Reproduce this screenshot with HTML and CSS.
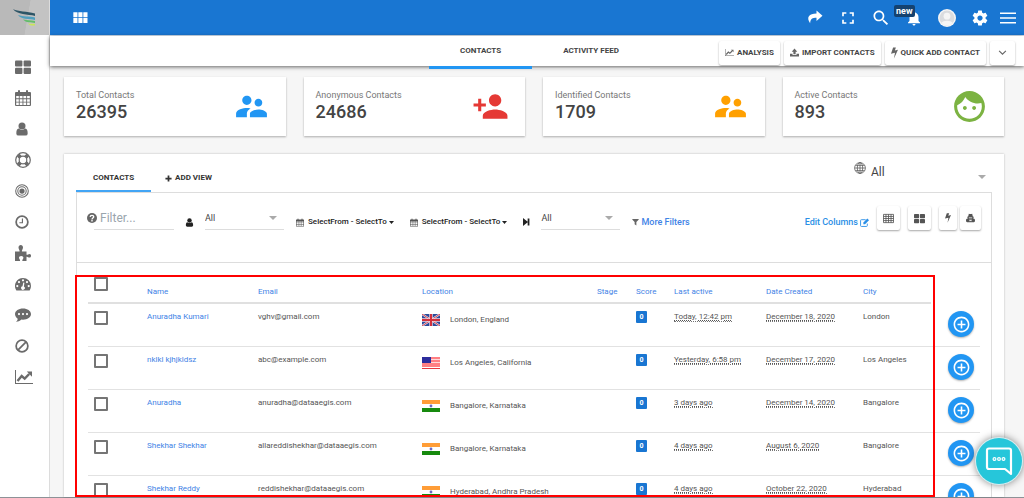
FILE: index.html
```html
<!DOCTYPE html>
<html lang="en">
<head>
	<meta charset="utf-8">
	<meta name="viewport" content="width=device-width, initial-scale=1">
	<title>Contacts</title>
	<link rel="stylesheet" href="styles.css">
</head>
<body>

<!-- icons -->
<svg class="sprite" width="0" height="0" aria-hidden="true">
	<symbol id="i-module" viewBox="0 0 24 24"><path d="M4 11h5V5H4v6zm0 7h5v-6H4v6zm6 0h5v-6h-5v6zm6 0h5v-6h-5v6zm-6-7h5V5h-5v6zm6-6v6h5V5h-5z"/></symbol>
	<symbol id="i-share" viewBox="0 0 24 24"><path d="M14 6V2l8 7-8 7v-4.500c-5.500 0-8 1-8.500 7.500C0 11 4 6 14 6z"/></symbol>
	<symbol id="i-full" viewBox="0 0 24 24"><path d="M7 14H5v5h5v-2H7v-3zm-2-4h2V7h3V5H5v5zm12 7h-3v2h5v-5h-2v3zM14 5v2h3v3h2V5h-5z"/></symbol>
	<symbol id="i-search" viewBox="0 0 24 24"><path d="M15.5 14h-.79l-.28-.27C15.41 12.59 16 11.11 16 9.5 16 5.91 13.09 3 9.5 3S3 5.91 3 9.5 5.91 16 9.5 16c1.61 0 3.09-.59 4.23-1.57l.27.28v.79l5 4.99L20.49 19l-4.99-5zm-6 0C7.01 14 5 11.99 5 9.5S7.01 5 9.5 5 14 7.01 14 9.5 11.99 14 9.5 14z"/></symbol>
	<symbol id="i-bell" viewBox="0 0 24 24"><path d="M12 22c1.1 0 2-.9 2-2h-4c0 1.1.89 2 2 2zm6-6v-5c0-3.07-1.64-5.64-4.5-6.32V4c0-.83-.67-1.5-1.5-1.5s-1.5.67-1.5 1.5v.68C7.63 5.36 6 7.92 6 11v5l-2 2v1h16v-1l-2-2z"/></symbol>
	<symbol id="i-avatar" viewBox="0 0 24 24"><circle cx="12" cy="12" r="12" fill="#f5f5f5"/><circle cx="12" cy="12" r="10" fill="#dadcdf"/><circle cx="12" cy="9.500" r="4.500" fill="#f5f5f5"/><path d="M4.500 18.500c2-4 13-4 15 0a10 10 0 0 1-15 0z" fill="#f5f5f5"/></symbol>
	<symbol id="i-gear" viewBox="0 0 24 24"><path d="M19.43 12.98c.04-.32.07-.64.07-.98s-.03-.66-.07-.98l2.11-1.65c.19-.15.24-.42.12-.64l-2-3.46c-.12-.22-.39-.3-.61-.22l-2.49 1c-.52-.4-1.08-.73-1.69-.98l-.38-2.65C14.46 2.18 14.25 2 14 2h-4c-.25 0-.46.18-.49.42l-.38 2.65c-.61.25-1.17.59-1.69.98l-2.49-1c-.23-.09-.49 0-.61.22l-2 3.46c-.13.22-.07.49.12.64l2.11 1.65c-.04.32-.07.65-.07.98s.03.66.07.98l-2.11 1.65c-.19.15-.24.42-.12.64l2 3.46c.12.22.39.3.61.22l2.49-1c.52.4 1.08.73 1.69.98l.38 2.65c.03.24.24.42.49.42h4c.25 0 .46-.18.49-.42l.38-2.65c.61-.25 1.17-.59 1.69-.98l2.49 1c.23.09.49 0 .61-.22l2-3.46c.12-.22.07-.49-.12-.64l-2.11-1.65zM12 15.5c-1.93 0-3.5-1.57-3.5-3.5s1.57-3.5 3.5-3.5 3.5 1.57 3.5 3.5-1.57 3.5-3.5 3.5z"/></symbol>
	<symbol id="i-menu" viewBox="0 0 16 16"><path d="M0 2.500h16v1.500H0zM0 7.300h16v1.500H0zM0 12.100h16v1.500H0z"/></symbol>
	<symbol id="i-people" viewBox="0 0 24 24"><path d="M16.5 12c1.38 0 2.49-1.12 2.49-2.5S17.88 7 16.5 7C15.12 7 14 8.12 14 9.5s1.12 2.5 2.5 2.5zM9 11c1.66 0 2.99-1.34 2.99-3S10.66 5 9 5C7.34 5 6 6.34 6 8s1.34 3 3 3zm7.5 3c-1.83 0-5.500.92-5.500 2.750V19h11v-2.250c0-1.830-3.670-2.750-5.500-2.750zM9 13c-2.330 0-7 1.170-7 3.500V19h7v-2.250c0-.85.33-2.340 2.370-3.470C10.500 13.100 9.660 13 9 13z"/></symbol>
	<symbol id="i-person-add" viewBox="0 0 24 24"><path d="M15 12c2.210 0 4-1.790 4-4s-1.790-4-4-4-4 1.790-4 4 1.790 4 4 4zm-9-2V7H4v3H1v2h3v3h2v-3h3v-2H6zm9 4c-2.670 0-8 1.340-8 4v2h16v-2c0-2.660-5.330-4-8-4z"/></symbol>
	<symbol id="i-face" viewBox="0 0 24 24"><path d="M9 11.750c-.69 0-1.250.56-1.250 1.250s.56 1.250 1.250 1.250 1.250-.56 1.250-1.250-.56-1.250-1.250-1.250zm6 0c-.69 0-1.250.56-1.250 1.250s.56 1.250 1.250 1.250 1.250-.56 1.250-1.250-.56-1.250-1.250-1.250zM12 2C6.480 2 2 6.480 2 12s4.480 10 10 10 10-4.480 10-10S17.520 2 12 2zm0 18c-4.410 0-8-3.590-8-8 0-.29.02-.58.05-.86 2.360-1.050 4.230-2.980 5.210-5.370C11.070 8.330 14.050 10 17.420 10c.78 0 1.530-.09 2.250-.26.21.71.33 1.470.33 2.260 0 4.410-3.590 8-8 8z"/></symbol>
	<symbol id="i-plus-circle" viewBox="0 0 24 24"><path d="M13 7h-2v4H7v2h4v4h2v-4h4v-2h-4V7zm-1-5C6.480 2 2 6.480 2 12s4.480 10 10 10 10-4.480 10-10S17.520 2 12 2zm0 18c-4.410 0-8-3.590-8-8s3.590-8 8-8 8 3.590 8 8-3.590 8-8 8z"/></symbol>
	<symbol id="i-tiles" viewBox="0 0 16 16"><rect x="0" y="1.500" width="7.400" height="6.100" rx="1"/><rect x="8.600" y="1.500" width="7.400" height="6.100" rx="1"/><rect x="0" y="8.800" width="7.400" height="6.100" rx="1"/><rect x="8.600" y="8.800" width="7.400" height="6.100" rx="1"/></symbol>
	<symbol id="i-calendar" viewBox="0 0 16 16"><path fill-rule="evenodd" d="M1 2h2V1q0-1 1-1t1 1v1h6V1q0-1 1-1t1 1v1h2q1 0 1 1v12q0 1-1 1H1q-1 0-1-1V3q0-1 1-1zM1.200 6v2.300h2.600V6zM4.700 6v2.300h2.800V6zM8.400 6v2.300h2.800V6zM12.100 6v2.300h2.700V6zM1.200 9.200v2.500h2.600V9.200zM4.700 9.200v2.500h2.800V9.200zM8.400 9.200v2.500h2.800V9.200zM12.100 9.200v2.500h2.700V9.200zM1.200 12.600V15h2.600v-2.400zM4.700 12.600V15h2.800v-2.400zM8.400 12.600V15h2.800v-2.400zM12.100 12.600V15h2.700v-2.400z"/></symbol>
	<symbol id="i-user" viewBox="0 0 16 16"><circle cx="8" cy="4.500" r="4"/><path d="M4.200 7.500Q8 10.500 11.800 7.500C13.800 8 14.500 10 14.500 13q0 2.500-2.500 2.500H4Q1.500 15.500 1.500 13c0-3 .7-5 2.700-5.500z"/></symbol>
	<symbol id="i-ring" viewBox="0 0 16 16"><g fill="none" stroke="currentColor"><circle cx="8" cy="8" r="7.300" stroke-width="1.200"/><circle cx="8" cy="8" r="3.800" stroke-width="1.200"/><path d="M3.200 3.200l2.200 2.200M12.800 3.200l-2.200 2.200M3.200 12.800l2.200-2.200M12.800 12.800l-2.200-2.200" stroke-width="3.800"/></g></symbol>
	<symbol id="i-target" viewBox="0 0 16 16"><g fill="none" stroke="currentColor" stroke-width="1.200"><circle cx="8" cy="8" r="7.200"/><circle cx="8" cy="8" r="4.800"/></g><circle cx="8" cy="8" r="3"/></symbol>
	<symbol id="i-clock" viewBox="0 0 16 16"><g fill="none" stroke="currentColor"><circle cx="8" cy="8" r="6.700" stroke-width="2"/><path d="M8.500 4v4.800H5" stroke-width="1.300"/></g></symbol>
	<symbol id="i-puzzle" viewBox="0 0 16 16"><path d="M0 6.500h4.500C5 5 3.500 4.500 3.500 2.500 3.500 1 4.500 0 5.800 0S8 1 8 2.500C8 4.500 6.500 5 7 6.500h4.500v3.200c1.200.6 1.500-.7 3-.7 1 0 1.500.8 1.500 1.700s-.5 1.800-1.500 1.800c-1.500 0-1.800-1.300-3-.7V16H7.400c-.5-1.600 1-1.700 1-3.200 0-1.100-.9-1.800-2.200-1.800s-2.200.7-2.200 1.800c0 1.500 1.500 1.600 1 3.200H0z"/></symbol>
	<symbol id="i-gauge" viewBox="0 0 16 16"><path fill-rule="evenodd" d="M8 2a8 8 0 0 1 8 8q0 2.300-1.200 4.200-.2.300-.6.300H1.800q-.4 0-.6-.3A8 8 0 0 1 8 2zM8 3.200a1 1 0 1 0 0 2.200 1 1 0 0 0 0-2.200zM4 5a1 1 0 1 0 0 2.200A1 1 0 0 0 4 5zM12 5a1 1 0 1 0 0 2.200A1 1 0 0 0 12 5zM2.300 9a1 1 0 1 0 0 2.200 1 1 0 0 0 0-2.200zM13.700 9a1 1 0 1 0 0 2.200 1 1 0 0 0 0-2.200zM8.300 6.500l-.8 3.800a1.800 1.800 0 1 0 1.400.2l.5-3.800z"/></symbol>
	<symbol id="i-comment" viewBox="0 0 16 16"><path fill-rule="evenodd" d="M8 1.500c4.400 0 8 2.400 8 5.600s-3.600 5.600-8 5.600q-.8 0-1.600-.1C4.800 14 3 14.800 1 14.900c1-.8 1.600-1.700 1.700-3.200C1 10.600 0 9 0 7.100c0-3.200 3.600-5.600 8-5.600zM4 6a1.100 1.100 0 1 0 0 2.200A1.100 1.100 0 0 0 4 6zM8 6a1.100 1.100 0 1 0 0 2.200A1.100 1.100 0 0 0 8 6zM12 6a1.100 1.100 0 1 0 0 2.200A1.100 1.100 0 0 0 12 6z"/></symbol>
	<symbol id="i-ban" viewBox="0 0 16 16"><g fill="none" stroke="currentColor" stroke-width="2"><circle cx="8" cy="8" r="6.700"/><path d="M12.700 3.300l-9.400 9.400"/></g></symbol>
	<symbol id="i-chart" viewBox="0 0 18 16"><path d="M0 1h1v13h17v1H0z"/><path d="M2.500 12l4.200-5 3 2.600 4.500-4.600" fill="none" stroke="currentColor" stroke-width="2.400"/><path d="M11.800 2.500H17v5.200z"/></symbol>
	<symbol id="i-upload" viewBox="0 0 16 16"><path d="M8 1l5 5.500h-3V11H6V6.500H3zM0 10h4.500v2.500h7V10H16v5H0z"/></symbol>
	<symbol id="i-bolt" viewBox="0 0 10 16"><path d="M3 0h4L5.500 4.300 10 3.200 4.200 16l1.500-8.500L0 9z"/></symbol>
	<symbol id="i-down" viewBox="0 0 16 16"><path d="M2 5l6 6 6-6" fill="none" stroke="currentColor" stroke-width="2"/></symbol>
	<symbol id="i-plus" viewBox="0 0 16 16"><path d="M6 1h4v5h5v4h-5v5H6v-5H1V6h5z"/></symbol>
	<symbol id="i-globe" viewBox="0 0 16 16"><g fill="none" stroke="currentColor"><circle cx="8" cy="8" r="7.200"/><ellipse cx="8" cy="8" rx="3.600" ry="7.200"/><path d="M8 1v14M1 8h14M2 4.500h12M2 11.500h12"/></g></symbol>
	<symbol id="i-help" viewBox="0 0 16 16"><circle cx="8" cy="8" r="8"/><g stroke="#fff" stroke-width="2.200" fill="none"><path d="M5 6.200C5.300 2.800 11 3 10.700 6.200 10.500 8 8 8 8 10.200M8 11.300v2.200"/></g></symbol>
	<symbol id="i-skip" viewBox="0 0 12 16"><path d="M0 1l8 6.500V2h3v12H8V8.500L0 15z"/></symbol>
	<symbol id="i-funnel" viewBox="0 0 16 16"><path d="M1 1h14q1 1 0 2L10 8v8l-4-3V8L1 3Q0 2 1 1z"/></symbol>
	<symbol id="i-edit" viewBox="0 0 16 16"><path d="M10 3H2.500Q1 3 1 4.500v9Q1 15 2.500 15h9q1.500 0 1.500-1.500V10" fill="none" stroke="currentColor" stroke-width="1.600"/><path d="M6 8l7-7 3 3-7 7H6z"/></symbol>
	<symbol id="i-grid" viewBox="0 0 16 16"><path fill="none" stroke="currentColor" stroke-width="1.200" d="M.7 2h14.600v12H.7zM.7 5h14.600M.7 8h14.600M.7 11h14.600M4.300 2v12M8 2v12M11.700 2v12"/></symbol>
	<symbol id="i-agent" viewBox="0 0 16 16"><path fill-rule="evenodd" d="M5 .500q3 1.200 6 0l1 4.500 2 1v1h-1v2c2.300 0 3 1.500 3 4q0 2.500-2 2.500H2q-2 0-2-2.500c0-2.500.7-4 3-4V7H2V6l2-1zM5 7v1.500h6V7zM5.500 11L7 14l1-1.500L9 14l1.500-3z"/></symbol>
	<symbol id="i-caret" viewBox="0 0 10 6"><path d="M0 0h10L5 6z"/></symbol>
	<symbol id="f-gb" viewBox="0 0 18 12"><path fill="#2b4a9b" d="M0 0h18v12H0z"/><path stroke="#dfe3f2" stroke-width="2" d="M0 0l18 12M18 0L0 12"/><path stroke="#d8404c" stroke-width="1" d="M0 0l18 12M18 0L0 12"/><path stroke="#f3d5dc" stroke-width="3.400" d="M9 0v12M0 6h18"/><path stroke="#d22f3c" stroke-width="2" d="M9 0v12M0 6h18"/></symbol>
	<symbol id="f-us" viewBox="0 0 18 12"><path fill="#ff7f83" d="M0 0h18v12H0z"/><path stroke="#ffd9d9" stroke-width="1" d="M0 2.500h18M0 5.500h18"/><path fill="#fff" d="M0 10h18v1H0z"/><path fill="#e8383f" d="M0 11h18v1H0z"/><path fill="#2c2c9c" d="M0 0h9v6H0z"/></symbol>
	<symbol id="f-in" viewBox="0 0 18 12"><path fill="#fff" d="M0 0h18v12H0z"/><path fill="#ff9d37" d="M0 0h18v4H0z"/><path fill="#178a0e" d="M0 8h18v4H0z"/><circle cx="9" cy="6" r="1.400" fill="#6a6ac0"/></symbol>
</svg>

<div class="app">
	<aside class="sidebar">
		<a class="logo" href="#" aria-label="Home">
			<svg width="24" height="18" viewBox="0 0 24 18">
				<path d="M0 0c5 3 14 2 22 4.500v2.500C15 5 4 6 0 0z" fill="#2d5566"/>
				<path d="M5 6c5 2 12 1 17 2.500V11C16 9.500 8 10.500 5 6z" fill="#4f9fbe"/>
				<path d="M10 10.500c4 1 8 .5 12 1.500v2c-4-1-9 0-12-3.500z" fill="#63bd6b"/>
				<path d="M15 14.500c3 .5 5 0 7 .5v1.500c-3 0-5 .5-7-2z" fill="#c9e65a"/>
			</svg>
		</a>
		<nav class="side-nav">
			<a href="#" aria-label="Dashboard"><svg class="icon-md"><use href="#i-tiles"/></svg></a>
			<a href="#" aria-label="Calendar"><svg class="icon-md"><use href="#i-calendar"/></svg></a>
			<a href="#" aria-label="Contacts"><svg class="icon-sm"><use href="#i-user"/></svg></a>
			<a href="#" aria-label="Support"><svg class="icon-md"><use href="#i-ring"/></svg></a>
			<a href="#" aria-label="Goals"><svg class="icon-sm"><use href="#i-target"/></svg></a>
			<a href="#" aria-label="History"><svg class="icon-sm"><use href="#i-clock"/></svg></a>
			<a href="#" aria-label="Plugins"><svg class="icon-md"><use href="#i-puzzle"/></svg></a>
			<a href="#" aria-label="Performance"><svg class="icon-md"><use href="#i-gauge"/></svg></a>
			<a href="#" aria-label="Messages"><svg class="icon-md"><use href="#i-comment"/></svg></a>
			<a href="#" aria-label="Blocked"><svg class="icon-sm"><use href="#i-ban"/></svg></a>
			<a href="#" aria-label="Reports"><svg class="icon-wide"><use href="#i-chart"/></svg></a>
		</nav>
	</aside>

	<div class="main">
		<header class="topbar">
			<button class="top-btn" type="button" aria-label="Apps"><svg class="icon-top"><use href="#i-module"/></svg></button>
			<div class="top-actions">
				<button class="top-btn" type="button" aria-label="Share"><svg class="icon-mid"><use href="#i-share"/></svg></button>
				<button class="top-btn" type="button" aria-label="Full screen"><svg class="icon-top"><use href="#i-full"/></svg></button>
				<button class="top-btn" type="button" aria-label="Search"><svg class="icon-top"><use href="#i-search"/></svg></button>
				<button class="top-btn" type="button" aria-label="Notifications"><svg class="icon-mid"><use href="#i-bell"/></svg><span class="new-badge">new</span></button>
				<button class="top-btn" type="button" aria-label="Profile"><svg class="icon-mid"><use href="#i-avatar"/></svg></button>
				<button class="top-btn" type="button" aria-label="Settings"><svg class="icon-mid"><use href="#i-gear"/></svg></button>
				<button class="top-btn menu-btn" type="button" aria-label="Menu"><svg class="icon-menu"><use href="#i-menu"/></svg></button>
			</div>
		</header>

		<div class="subbar">
			<nav class="tabs">
				<a class="tab active" href="#">CONTACTS</a>
				<a class="tab" href="#">ACTIVITY FEED</a>
			</nav>
			<div class="actions">
				<button class="btn" type="button"><svg class="icon-xs"><use href="#i-chart"/></svg>ANALYSIS</button>
				<button class="btn" type="button"><svg class="icon-xs"><use href="#i-upload"/></svg>IMPORT CONTACTS</button>
				<button class="btn" type="button"><svg class="icon-bolt"><use href="#i-bolt"/></svg>QUICK ADD CONTACT</button>
				<button class="btn btn-more" type="button" aria-label="More"><svg class="icon-xs"><use href="#i-down"/></svg></button>
			</div>
		</div>

		<main class="content">
			<section class="cards">
				<div class="card"><div><div class="card-label">Total Contacts</div><div class="card-num">26395</div></div><svg class="card-icon blue"><use href="#i-people"/></svg></div>
				<div class="card"><div><div class="card-label">Anonymous Contacts</div><div class="card-num">24686</div></div><svg class="card-icon red"><use href="#i-person-add"/></svg></div>
				<div class="card"><div><div class="card-label">Identified Contacts</div><div class="card-num">1709</div></div><svg class="card-icon orange"><use href="#i-people"/></svg></div>
				<div class="card"><div><div class="card-label">Active Contacts</div><div class="card-num">893</div></div><svg class="card-icon green"><use href="#i-face"/></svg></div>
			</section>

			<section class="panel">
				<div class="panel-head">
					<nav class="views">
						<a class="view active" href="#">CONTACTS</a>
						<a class="view" href="#"><svg class="icon-plus"><use href="#i-plus"/></svg>ADD VIEW</a>
					</nav>
					<div class="scope">
						<svg class="icon-globe"><use href="#i-globe"/></svg>
						<div class="pick pick-scope"><select aria-label="Scope"><option>All</option></select></div>
					</div>
				</div>

				<div class="panel-body">
					<div class="filters">
						<div class="filter-input">
							<svg class="icon-help"><use href="#i-help"/></svg>
							<input type="text" placeholder="Filter..." aria-label="Filter">
						</div>
						<svg class="icon-xs low dark"><use href="#i-user"/></svg>
						<div class="pick"><select aria-label="Owner"><option>All</option></select></div>
						<button class="range low" type="button"><svg class="icon-cal"><use href="#i-calendar"/></svg>SelectFrom - SelectTo<svg class="icon-caret"><use href="#i-caret"/></svg></button>
						<button class="range low" type="button"><svg class="icon-cal"><use href="#i-calendar"/></svg>SelectFrom - SelectTo<svg class="icon-caret"><use href="#i-caret"/></svg></button>
						<svg class="icon-skip low dark"><use href="#i-skip"/></svg>
						<div class="pick"><select aria-label="Stage"><option>All</option></select></div>
						<a class="more low" href="#"><svg class="icon-funnel"><use href="#i-funnel"/></svg>More Filters</a>
						<div class="tools">
							<a class="edit low" href="#">Edit Columns<svg class="icon-xs"><use href="#i-edit"/></svg></a>
							<button class="tool" type="button" aria-label="Table view"><svg class="icon-tool"><use href="#i-grid"/></svg></button>
							<button class="tool" type="button" aria-label="Card view"><svg class="icon-tool"><use href="#i-tiles"/></svg></button>
							<div class="tool-pair">
								<button class="tool tool-slim" type="button" aria-label="Quick actions"><svg class="icon-bolt-sm"><use href="#i-bolt"/></svg></button>
								<button class="tool tool-mid" type="button" aria-label="Assign"><svg class="icon-agent"><use href="#i-agent"/></svg></button>
							</div>
						</div>
					</div>

					<div class="table-area">
						<div class="table-scroll">
							<table class="contacts">
								<colgroup>
									<col class="c-check"><col class="c-name"><col class="c-email"><col class="c-loc"><col class="c-stage"><col class="c-score"><col class="c-last"><col class="c-date"><col class="c-city"><col class="c-add">
								</colgroup>
								<thead>
									<tr>
										<th class="check"><input type="checkbox" aria-label="Select all"></th>
										<th><a href="#">Name</a></th>
										<th><a href="#">Email</a></th>
										<th><a href="#">Location</a></th>
										<th><a href="#">Stage</a></th>
										<th><a href="#">Score</a></th>
										<th><a href="#">Last active</a></th>
										<th><a href="#">Date Created</a></th>
										<th><a href="#">City</a></th>
										<th class="blank"></th>
									</tr>
								</thead>
								<tbody>
									<tr>
										<td class="check"><input type="checkbox" aria-label="Select Anuradha Kumari"></td>
										<td><a href="#">Anuradha Kumari</a></td>
										<td>vghv@gmail.com</td>
										<td><div class="loc"><svg class="flag"><use href="#f-gb"/></svg>London, England</div></td>
										<td></td>
										<td><span class="score">0</span></td>
										<td><abbr>Today, 12:42 pm</abbr></td>
										<td><abbr>December 18, 2020</abbr></td>
										<td>London</td>
										<td class="add"><button class="add-btn" type="button" aria-label="Add"><svg><use href="#i-plus-circle"/></svg></button></td>
									</tr>
									<tr>
										<td class="check"><input type="checkbox" aria-label="Select nklkl kjhjkldsz"></td>
										<td><a href="#">nklkl kjhjkldsz</a></td>
										<td>abc@example.com</td>
										<td><div class="loc"><svg class="flag"><use href="#f-us"/></svg>Los Angeles, California</div></td>
										<td></td>
										<td><span class="score">0</span></td>
										<td><abbr>Yesterday, 6:58 pm</abbr></td>
										<td><abbr>December 17, 2020</abbr></td>
										<td>Los Angeles</td>
										<td class="add"><button class="add-btn" type="button" aria-label="Add"><svg><use href="#i-plus-circle"/></svg></button></td>
									</tr>
									<tr>
										<td class="check"><input type="checkbox" aria-label="Select Anuradha"></td>
										<td><a href="#">Anuradha</a></td>
										<td>anuradha@dataaegis.com</td>
										<td><div class="loc"><svg class="flag"><use href="#f-in"/></svg>Bangalore, Karnataka</div></td>
										<td></td>
										<td><span class="score">0</span></td>
										<td><abbr>3 days ago</abbr></td>
										<td><abbr>December 14, 2020</abbr></td>
										<td>Bangalore</td>
										<td class="add"><button class="add-btn" type="button" aria-label="Add"><svg><use href="#i-plus-circle"/></svg></button></td>
									</tr>
									<tr>
										<td class="check"><input type="checkbox" aria-label="Select Shekhar Shekhar"></td>
										<td><a href="#">Shekhar Shekhar</a></td>
										<td>allareddishekhar@dataaegis.com</td>
										<td><div class="loc"><svg class="flag"><use href="#f-in"/></svg>Bangalore, Karnataka</div></td>
										<td></td>
										<td><span class="score">0</span></td>
										<td><abbr>4 days ago</abbr></td>
										<td><abbr>August 6, 2020</abbr></td>
										<td>Bangalore</td>
										<td class="add"><button class="add-btn" type="button" aria-label="Add"><svg><use href="#i-plus-circle"/></svg></button></td>
									</tr>
									<tr>
										<td class="check"><input type="checkbox" aria-label="Select Shekhar Reddy"></td>
										<td><a href="#">Shekhar Reddy</a></td>
										<td>reddishekhar@dataaegis.com</td>
										<td><div class="loc"><svg class="flag"><use href="#f-in"/></svg>Hyderabad, Andhra Pradesh</div></td>
										<td></td>
										<td><span class="score">0</span></td>
										<td><abbr>4 days ago</abbr></td>
										<td><abbr>October 22, 2020</abbr></td>
										<td>Hyderabad</td>
										<td class="add"><button class="add-btn" type="button" aria-label="Add"><svg><use href="#i-plus-circle"/></svg></button></td>
									</tr>
								</tbody>
							</table>
						</div>
						<div class="highlight"></div>
					</div>
				</div>
			</section>
		</main>
	</div>
</div>

<button class="chat" type="button" aria-label="Chat">
	<svg width="28" height="30" viewBox="0 0 28 30">
		<g fill="none" stroke="#fff">
			<path d="M4 2.500h20q2 0 2 2V28l-6-5H4q-2 0-2-2V4.500q0-2 2-2z" stroke-width="2.200" stroke-linejoin="round"/>
			<g stroke-width="1.200"><circle cx="9.500" cy="13" r="1.400"/><circle cx="14" cy="13" r="1.400"/><circle cx="18.500" cy="13" r="1.400"/></g>
		</g>
	</svg>
</button>

</body>
</html>
```
FILE: styles.css
```css
*{
	box-sizing:border-box;
}
body{
	margin:0;
	background:#f6f6f6;
	color:#555;
	font-family:Roboto, "Liberation Sans", sans-serif;
	font-size:9px;
	line-height:12px;
}
a{
	color:#3f83e6;
	text-decoration:none;
}
button, input, select{
	font:inherit;
	color:inherit;
	margin:0;
	padding:0;
	border:0;
	background:none;
}
button{
	cursor:pointer;
}
svg{
	display:block;
	flex:none;
	fill:currentColor;
}
.sprite{
	position:absolute;
}

/* icon sizes */
.icon-md{ width:16px; height:16px; }
.icon-sm{ width:14px; height:14px; }
.icon-wide{ width:18px; height:16px; }
.icon-xs{ width:9px; height:9px; }
.icon-help{ width:10px; height:10px; }
.icon-top{ width:20px; height:20px; }
.icon-mid{ width:18px; height:18px; }
.icon-menu{ width:16px; height:16px; }
.icon-bolt{ width:7px; height:12px; }
.icon-bolt-sm{ width:6px; height:10px; }
.icon-plus{ width:7px; height:7px; }
.icon-globe{ width:12px; height:12px; }
.icon-cal{ width:8px; height:9px; }
.icon-caret{ width:5px; height:3px; }
.icon-skip{ width:7px; height:10px; }
.icon-funnel{ width:7px; height:8px; }
.icon-tool{ width:11px; height:11px; }
.icon-agent{ width:9px; height:10px; }

.app{
	display:flex;
	height:100vh;
	border-bottom:1px solid #8d9297;
}

/* sidebar */
.sidebar{
	flex:none;
	width:50px;
	background:#fff;
	border-right:1px solid #dcdcdc;
}
.logo{
	display:flex;
	align-items:center;
	justify-content:center;
	height:35px;
	background:linear-gradient(100deg, #b9b9b9 55%, #c3c3c3 56%);
}
.side-nav{
	display:flex;
	flex-direction:column;
	padding:16px 0 0 15px;
}
.side-nav a{
	display:flex;
	align-items:center;
	height:31px;
	color:#6b6b6b;
}

/* top bar */
.main{
	flex:1;
	min-width:0;
	display:flex;
	flex-direction:column;
}
.topbar{
	flex:none;
	display:flex;
	justify-content:space-between;
	height:36px;
	padding:0 4px 0 13px;
	background:#1976d2;
	border-bottom:1px solid #d8e6f5;
	color:#fff;
}
.top-actions{
	display:flex;
}
.top-btn{
	position:relative;
	display:flex;
	align-items:center;
	justify-content:center;
	width:33px;
	height:36px;
}
.menu-btn{
	width:24px;
}
.new-badge{
	position:absolute;
	top:5px;
	left:-3px;
	padding:0 2px;
	border-radius:2px;
	background:#15426f;
	font-weight:700;
	line-height:12px;
}

.subbar{
	flex:none;
	position:relative;
	display:grid;
	grid-template-columns:1fr auto 1fr;
	height:30px;
	padding:0 9px 0 14px;
	background:#fff;
	box-shadow:0 1px 4px rgba(0,0,0,.6);
}
.tabs{
	grid-column:2;
	display:flex;
}
.tab{
	padding:0 31px;
	border-bottom:1px solid #ddd;
	color:#444;
	font-size:8px;
	font-weight:700;
	line-height:30px;
}
.tab.active{
	border-bottom:3px solid #2196f3;
}
.actions{
	display:flex;
	align-items:center;
	justify-content:flex-end;
	gap:4px;
}
.btn{
	display:flex;
	align-items:center;
	gap:3px;
	height:24px;
	padding:0 6px;
	border-radius:2px;
	box-shadow:0 1px 2px rgba(0,0,0,.35);
	color:#444;
	font-size:8px;
	font-weight:700;
	white-space:nowrap;
}
.btn svg{
	color:#666;
}
.btn-more{
	padding:0 8px;
}

/* stat cards */
.content{
	flex:1;
	min-height:0;
	display:flex;
	flex-direction:column;
	gap:18px;
	padding:11px 20px 0 14px;
}
.cards{
	display:grid;
	grid-template-columns:repeat(4, 1fr);
	gap:18px;
}
.card{
	display:flex;
	align-items:center;
	justify-content:space-between;
	height:59px;
	padding:0 16px 1px 12px;
	background:#fff;
	box-shadow:0 1px 2px rgba(0,0,0,.3);
}
.card-label{
	color:#777;
}
.card-num{
	color:#444;
	font-size:18px;
	font-weight:500;
	line-height:22px;
}
.card-icon{
	width:37px;
	height:37px;
}
.blue{ color:#2196f3; }
.red{ color:#e53935; }
.orange{ color:#ffa000; }
.green{ color:#7cb342; }

/* panel */
.panel{
	flex:1;
	min-height:0;
	display:flex;
	flex-direction:column;
	padding:0 12px;
	background:#fff;
	box-shadow:0 0 2px rgba(0,0,0,.25);
}
.panel-head{
	display:flex;
	justify-content:space-between;
	height:38px;
}
.views{
	display:flex;
	align-items:flex-end;
}
.view{
	display:flex;
	align-items:center;
	gap:3px;
	height:28px;
	padding:0 14px;
	color:#333;
	font-size:8px;
	font-weight:700;
}
.view.active{
	padding:2px 17px 0;
	border-bottom:2px solid #42a5f5;
}
.scope{
	display:flex;
	align-items:flex-start;
	gap:5px;
	padding:8px 6px 0 0;
	color:#555;
}
.pick{
	display:flex;
	align-items:center;
	width:79px;
	height:23px;
	border-bottom:1px solid #ddd;
	color:#444;
}
.pick select{
	flex:1;
	min-width:0;
	height:20px;
	appearance:none;
}
.pick::after{
	content:"";
	margin:0 7px 0 -15px;
	border:4px solid transparent;
	border-top-color:#aaa;
	border-bottom:0;
	pointer-events:none;
}
.pick-scope{
	width:115px;
	height:auto;
	border:0;
	font-size:12px;
}
.pick-scope::after{
	margin:9px 0 0 -8px;
}

.panel-body{
	flex:1;
	min-height:0;
	display:flex;
	flex-direction:column;
	border:1px solid #ddd;
	border-bottom:0;
}
.filters{
	flex:none;
	display:flex;
	align-items:center;
	height:70px;
	padding:0 10px 19px;
	border-bottom:1px solid #ddd;
}
.low{
	margin-top:8px;
}
.dark{
	color:#222;
}
.filter-input{
	display:flex;
	align-items:center;
	width:87px;
	height:23px;
	margin-right:11px;
	color:#666;
}
.filter-input input{
	flex:1;
	min-width:0;
	height:23px;
	margin-left:-3px;
	padding-left:6px;
	border-bottom:1px solid #ddd;
	font-size:12px;
}
.filter-input input::placeholder{
	color:#9aa5ad;
}
.filters > .pick{
	margin:0 12px 0 11px;
}
.range{
	display:flex;
	align-items:center;
	gap:4px;
	margin-right:16px;
	color:#222;
	font-size:8px;
	font-weight:500;
	white-space:nowrap;
}
.range svg:first-child{
	color:#555;
}
.range svg:last-child{
	margin-left:-2px;
}
.more, .edit{
	display:flex;
	align-items:center;
	gap:2px;
	font-weight:500;
	white-space:nowrap;
}
.more svg{
	color:#666;
}
.tools{
	display:flex;
	align-items:center;
	gap:8px;
	margin-left:auto;
}
.edit{
	color:#2a8fe6;
}
.tool{
	display:flex;
	align-items:center;
	justify-content:center;
	width:23px;
	height:24px;
	border-radius:2px;
	box-shadow:0 1px 2px rgba(0,0,0,.35);
	color:#555;
}
.tool-pair{
	display:flex;
	gap:3px;
}
.tool-slim{ width:18px; }
.tool-mid{ width:21px; }

/* contacts table */
.table-area{
	flex:1;
	min-height:0;
	position:relative;
	padding:13px 11px 0;
}
.table-scroll{
	height:100%;
	overflow-y:auto;
	scrollbar-width:none;
}
.contacts{
	width:100%;
	table-layout:fixed;
	border-spacing:0;
	font-size:8px;
}
.c-check{ width:53px; }
.c-name{ width:111px; }
.c-email{ width:164px; }
.c-loc{ width:175px; }
.c-stage{ width:39px; }
.c-score{ width:38px; }
.c-last{ width:92px; }
.c-date{ width:97px; }
.c-city{ width:74px; }
.c-add{ width:49px; }

.contacts th{
	height:28px;
	padding:10px 0 0 6px;
	border-bottom:2px solid #e0e0e0;
	font-weight:400;
	text-align:left;
	vertical-align:top;
	white-space:nowrap;
}
.contacts th.check{
	padding-top:1px;
}
.contacts th.blank{
	border:0;
}
.contacts td{
	height:43px;
	padding:7px 0 0 6px;
	border-bottom:1px solid #e2e2e2;
	vertical-align:top;
	white-space:nowrap;
}
.contacts .check input{
	display:block;
	appearance:none;
	width:14px;
	height:14px;
	border:2px solid #757575;
	border-radius:1px;
}
.contacts td.add{
	padding-left:17px;
}
.loc{
	display:flex;
	align-items:center;
	gap:10px;
	padding-top:3px;
}
.flag{
	width:18px;
	height:12px;
}
.score{
	display:block;
	width:11px;
	height:12px;
	border-radius:1px;
	background:#1976d2;
	color:#fff;
	font-size:7px;
	font-weight:700;
	text-align:center;
}
.contacts abbr{
	border-bottom:1px dotted #777;
	text-decoration:underline dotted;
}
.add-btn{
	display:flex;
	align-items:center;
	justify-content:center;
	width:26px;
	height:26px;
	border-radius:50%;
	background:#2196f3;
	box-shadow:0 1px 2px rgba(0,0,0,.3);
	color:#fff;
}
.add-btn svg{
	width:19px;
	height:19px;
}
.highlight{
	position:absolute;
	top:12px;
	right:56px;
	bottom:0;
	left:-2px;
	border:2px solid #f00;
	pointer-events:none;
}

/* chat bubble */
.chat{
	position:fixed;
	right:2px;
	bottom:14px;
	display:flex;
	align-items:center;
	justify-content:center;
	width:46px;
	height:46px;
	border-radius:50%;
	background:#26c6da;
	box-shadow:0 0 0 1px #d5eef1, 0 0 8px rgba(0,0,0,.6);
}
```
